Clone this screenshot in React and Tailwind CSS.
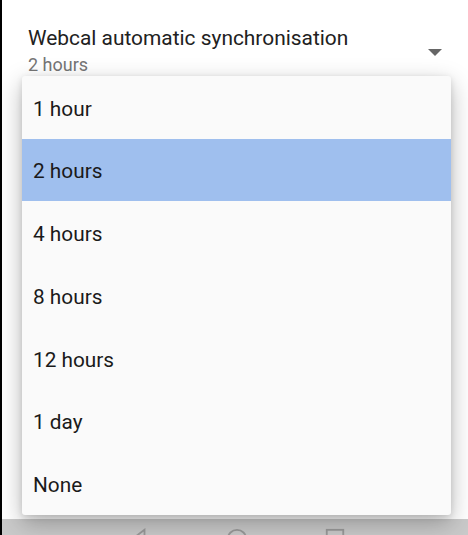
import { useState } from 'react'

const options = ['1 hour', '2 hours', '4 hours', '8 hours', '12 hours', '1 day', 'None']

export default function App() {
  const [selected, setSelected] = useState('2 hours')

  return (
    <div className="relative w-[468px] h-[535px] overflow-hidden bg-white flex font-['Roboto',sans-serif]">
      {/* left edge strip */}
      <div className="w-[2px] bg-black shrink-0" />

      <div className="flex-1 flex flex-col">
        {/* Preference row */}
        <div className="shrink-0 flex items-start justify-between pl-[26px] pr-[26px] pt-[25px] h-[519px]">
          <div className="flex flex-col">
            <span className="text-[20.9px] leading-[27px] text-[#212121]">Webcal automatic synchronisation</span>
            <span className="text-[18px] leading-[25px] text-[#757575]">{selected}</span>
          </div>
          <svg width="14" height="8" viewBox="0 0 14 8" className="mt-[24px]">
            <path d="M0 0 L14 0 L7 7 Z" fill="#666666" />
          </svg>
        </div>

        {/* Navigation bar */}
        <div className="flex-1 min-h-0 overflow-hidden bg-[#cacaca] flex justify-center gap-[76px] pt-[9px] pl-[4px]">
          <svg width="22" height="22" viewBox="0 0 24 24" className="shrink-0">
            <path d="M18 2 L6 11 L18 20 Z" fill="none" stroke="#9a9a9a" strokeWidth="2" />
          </svg>
          <svg width="22" height="22" viewBox="0 0 24 24" className="shrink-0">
            <circle cx="12" cy="12" r="10" fill="none" stroke="#9a9a9a" strokeWidth="2" />
          </svg>
          <svg width="22" height="22" viewBox="0 0 24 24" className="shrink-0">
            <rect x="3" y="2" width="18" height="18" fill="none" stroke="#9a9a9a" strokeWidth="2" />
          </svg>
        </div>
      </div>

      {/* Dropdown menu */}
      <div className="absolute left-[22px] top-[76px] w-[429px] bg-[#fafafa] rounded-[3px] shadow-[0_8px_24px_rgba(0,0,0,0.28),0_2px_6px_rgba(0,0,0,0.12)] flex flex-col">
        {options.map((opt) => (
          <button
            key={opt}
            onClick={() => setSelected(opt)}
            className={`h-[62.7px] flex items-center pl-[11px] pt-[4px] text-left text-[20.8px] text-[#1a1a1a] ${
              opt === selected ? 'bg-[#9fbfee]' : ''
            }`}
          >
            {opt}
          </button>
        ))}
      </div>
    </div>
  )
}
